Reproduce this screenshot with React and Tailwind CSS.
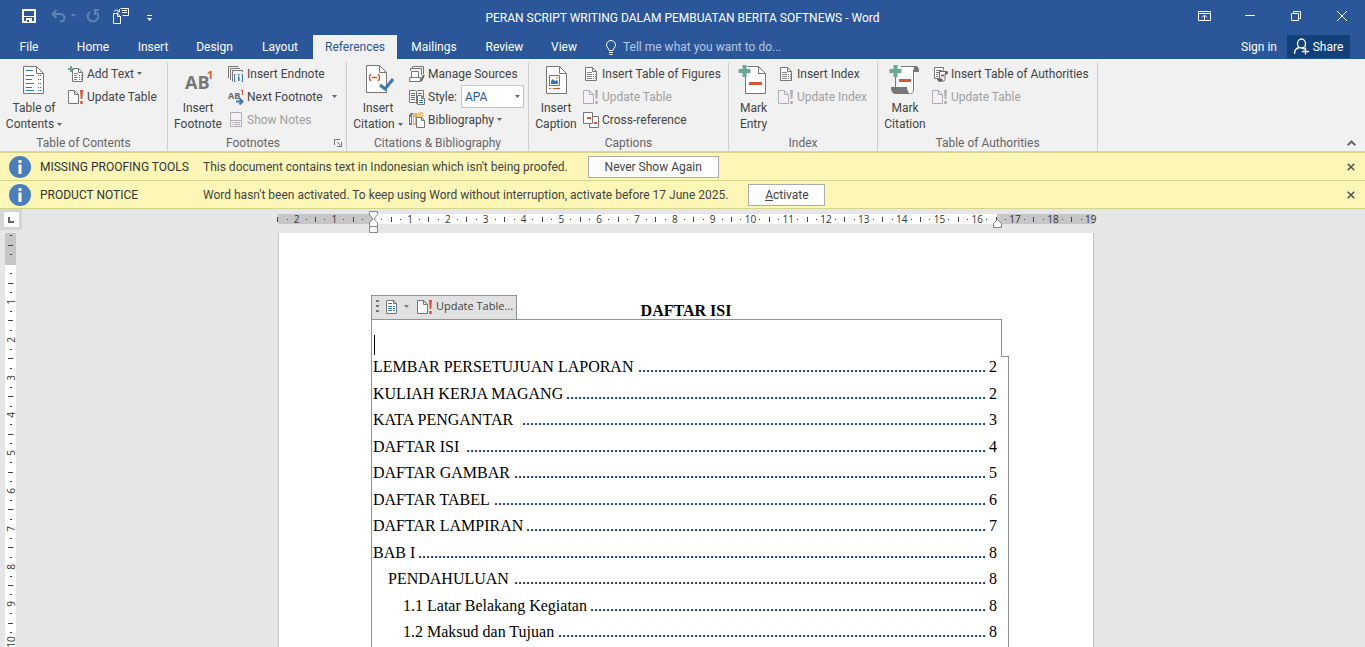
import React from "react";
import clsx from "clsx";

const TABS = [
  { label: "Home", width: "w-[62px]" },
  { label: "Insert", width: "w-[58px]" },
  { label: "Design", width: "w-[65px]" },
  { label: "Layout", width: "w-[66px]" },
  { label: "References", width: "w-[84px]", active: true },
  { label: "Mailings", width: "w-[74px]" },
  { label: "Review", width: "w-[67px]" },
  { label: "View", width: "w-[52px]" },
];

// dots is the length of the tab leader between the title and the page number
const TOC = [
  { title: "LEMBAR PERSETUJUAN LAPORAN", page: 2, level: 0, dots: 87 },
  { title: "KULIAH KERJA MAGANG", page: 2, level: 0, dots: 105 },
  { title: "KATA PENGANTAR", page: 3, level: 0, dots: 116 },
  { title: "DAFTAR ISI", page: 4, level: 0, dots: 130 },
  { title: "DAFTAR GAMBAR", page: 5, level: 0, dots: 118 },
  { title: "DAFTAR TABEL", page: 6, level: 0, dots: 123 },
  { title: "DAFTAR LAMPIRAN", page: 7, level: 0, dots: 115 },
  { title: "BAB I", page: 8, level: 0, dots: 142 },
  { title: "PENDAHULUAN", page: 8, level: 1, dots: 118 },
  { title: "1.1 Latar Belakang Kegiatan", page: 8, level: 2, dots: 99 },
  { title: "1.2 Maksud dan Tujuan", page: 8, level: 2, dots: 107 },
];

const INDENT = ["pl-0", "pl-[15px]", "pl-[30px]"];

/* ---------- icons ---------- */

function Icon({ w = 16, h = 16, className, children }) {
  return (
    <svg
      width={w}
      height={h}
      viewBox={`0 0 ${w} ${h}`}
      fill="none"
      className={clsx("shrink-0", className)}
      aria-hidden="true"
    >
      {children}
    </svg>
  );
}

function Caret({ className }) {
  return (
    <Icon w={5} h={3} className={className}>
      <path d="M0 0h5L2.5 3z" fill="currentColor" />
    </Icon>
  );
}

// sheet of paper with a folded top right corner
function Sheet({ x = 0, y = 0, w, h, fold, stroke = "#777", fill = "#fff" }) {
  const l = x + 0.5;
  const t = y + 0.5;
  const r = x + w - 0.5;
  const b = y + h - 0.5;
  return (
    <>
      <path
        d={`M${l} ${t}H${r - fold}L${r} ${t + fold}V${b}H${l}z`}
        fill={fill}
        stroke={stroke}
      />
      <path d={`M${r - fold} ${t}V${t + fold}H${r}`} stroke={stroke} />
    </>
  );
}

function TocIcon() {
  return (
    <Icon w={32} h={32}>
      <Sheet x={5} y={1} w={21} h={28} fold={7} />
      <path d="M8 5.500h7M8 10.500h8M8 14.500h6M8 18.500h8M8 22.500h6M8 25.500h8" stroke="#2f75b5" />
      <path d="M20 10.500h4M20 14.500h4M20 18.500h4M20 22.500h4M20 25.500h4" stroke="#2f75b5" strokeDasharray="1 1" />
    </Icon>
  );
}

function AddTextIcon() {
  return (
    <Icon>
      <Sheet x={4} y={2} w={11} h={14} fold={4} />
      <path d="M6 7.500h4M6 9.500h3M6 11.500h4M6 13.500h3" stroke="#888" />
      <path d="M11 9.500h3M11 11.500h3M11 13.500h3" stroke="#3b78b5" strokeDasharray="1 1" />
      <path d="M3 0v6M0 3h6" stroke="#6fa595" strokeWidth="2" />
    </Icon>
  );
}

function UpdateIcon({ muted }) {
  const line = muted ? "#b1afb1" : "#777";
  return (
    <Icon>
      <Sheet y={1} w={11} h={14} fold={4} stroke={line} fill={muted ? "#f5eff7" : "#fff"} />
      <path
        d="M12 1h3l-.7 9h-1.600zM12.300 12h2.400v3h-2.400z"
        fill={muted ? "#b1afb1" : "#d65532"}
      />
    </Icon>
  );
}

function FootnoteIcon() {
  return (
    <Icon w={32} h={32}>
      <text x="3" y="24" fontSize="18" fontWeight="700" fill="#777" fontFamily="Open Sans, sans-serif">
        AB
      </text>
      <text x="25" y="14" fontSize="11" fontWeight="700" fill="#d65532" fontFamily="Open Sans, sans-serif">
        1
      </text>
    </Icon>
  );
}

function EndnoteIcon() {
  return (
    <Icon>
      <path d="M.5 12V.5H10M2.500 14V2.500H12M4.500 15.500V4.500H14.500V6" stroke="#777" />
      <path d="M7.500 8.500h-1v7h1M13.500 8.500h1v7h-1" stroke="#3b78b5" />
      <path d="M10 8h1.500v1.500H10zM10 10.500h1.500V15H10z" fill="#3b78b5" />
    </Icon>
  );
}

function NextFootnoteIcon() {
  return (
    <Icon>
      <text x="0" y="10" fontSize="9" fontWeight="700" fill="#666" fontFamily="Open Sans, sans-serif">
        AB
      </text>
      <path d="M13 2l1.500-1V6" stroke="#d65532" />
      <path d="M8 12.500h6M11.500 9.500l3 3-3 3" stroke="#3b78b5" strokeWidth="2" />
    </Icon>
  );
}

function ShowNotesIcon() {
  return (
    <Icon>
      <path d="M2.500.5h11v14h-11z" fill="#f5eff7" stroke="#b1afb1" />
      <path d="M3 8.500h10" stroke="#b1afb1" />
      <path d="M4 10.500h1M6 10.500h6M4 12.500h1M6 12.500h6" stroke="#b1afb1" />
    </Icon>
  );
}

function CitationIcon() {
  return (
    <Icon w={32} h={32}>
      <Sheet x={4} y={0} w={21} h={28} fold={7} />
      <path d="M9 9c-2 2-2 5 0 7M16 9c2 2 2 5 0 7M10 12.500h5" stroke="#d65532" strokeWidth="1.600" />
      <path d="M18 20l5 4 8-10" stroke="#3b78b5" strokeWidth="3" />
    </Icon>
  );
}

function SourcesIcon() {
  return (
    <Icon>
      <path d="M3.500 3V.5h11V8M1.500 5V2.500h11V9" stroke="#777" />
      <path d="M.5 15.500v-4h11v4zM2.500 11V5.500h7V11" fill="#fff" stroke="#777" />
      <path d="M12 15l3-6" stroke="#666" strokeWidth="2" />
    </Icon>
  );
}

function StyleIcon() {
  return (
    <Icon>
      <path d="M.5 1.500h6l1 1 1-1h6v12h-6l-1 1-1-1h-6zM7.500 2v12" fill="#fff" stroke="#777" />
      <path d="M2 4.500h4M2 6.500h4M2 8.500h4M2 10.500h4M9 4.500h4" stroke="#3b78b5" />
      <Sheet x={8} y={6} w={8} h={10} fold={3} />
      <path d="M10 11.500h4M10 13.500h4" stroke="#3b78b5" />
    </Icon>
  );
}

function BibliographyIcon() {
  return (
    <Icon>
      <path d="M0 3l2-2h3L3 3v10H0z" fill="#777" />
      <path d="M4 3l2-2h2v12H4z" fill="#e9b55c" />
      <path d="M8 2l2-2h4v6H8z" fill="#f0c98a" />
      <path d="M1.500 5v6M5.500 5v6" stroke="#fff" />
      <Sheet x={7} y={5} w={9} h={11} fold={3} />
    </Icon>
  );
}

function CaptionIcon() {
  return (
    <Icon w={32} h={32}>
      <Sheet x={6} y={1} w={21} h={28} fold={7} />
      <path d="M9.500 10.500h10v10h-10z" fill="#fff" stroke="#777" />
      <path d="M11 19v-3l2-2 2 2 2-1 1 2v2z" fill="#3b78b5" />
      <path d="M16 12h2v2h-2z" fill="#e9b55c" />
      <path d="M9 23.500h2M13 23.500h7" stroke="#d65532" />
    </Icon>
  );
}

function ListIcon() {
  return (
    <Icon>
      <Sheet x={2} y={1} w={12} h={14} fold={4} />
      <path d="M4 6.500h5M4 8.500h5M4 10.500h5M4 12.500h5" stroke="#888" />
      <path d="M10 8.500h1M10 10.500h1M10 12.500h1M12 8.500h1M12 10.500h1M12 12.500h1" stroke="#888" />
    </Icon>
  );
}

function CrossRefIcon() {
  return (
    <Icon>
      <path d="M6.500 4.500h9v11h-9z" fill="#fff" stroke="#777" />
      <path d="M.5.5h9v11h-9z" fill="#fff" stroke="#777" />
      <path d="M4 5h4v2H4zM11 10h3v2h-3z" fill="#d65532" />
    </Icon>
  );
}

function MarkEntryIcon() {
  return (
    <Icon w={32} h={32}>
      <Sheet x={7} y={1} w={21} h={28} fold={7} />
      <path d="M6.500 0v12M.5 6h12" stroke="#f1f1f1" strokeWidth="6" />
      <path d="M6.500 0v12M.5 6h12" stroke="#6fa595" strokeWidth="4" />
      <path d="M11 18.500h13" stroke="#d65532" strokeWidth="3" />
    </Icon>
  );
}

function MarkCitationIcon() {
  return (
    <Icon w={32} h={32}>
      <path d="M8 1.500h18v24c0 2-2 3-4 3H9V8z" fill="#fff" />
      <path d="M12 1.500h13M6.500 10v12M24.500 5v20c0 2-1 3.500-3 3.500" stroke="#777" />
      <path d="M24 1h3c2 0 3 2 3 6h-5c0-3 0-5-1-6zM2 22h16c0 3 1 5 3 7H7c-3 0-5-2-5-7z" fill="#777" />
      <path d="M6.500 0v12M.5 6h12" stroke="#f1f1f1" strokeWidth="6" />
      <path d="M6.500 0v12M.5 6h12" stroke="#6fa595" strokeWidth="4" />
      <path d="M10 15.500h12" stroke="#d65532" strokeWidth="3" />
    </Icon>
  );
}

function AuthoritiesIcon() {
  return (
    <Icon>
      <path d="M2.500 12.500V1.500h9v3" fill="#fff" stroke="#777" />
      <path d="M2.500 12.500h3M4 4.500h6M4 6.500h3M4 8.500h2M4 10.500h2" stroke="#777" />
      <path d="M7.500 5.500h6c1 0 1.500 1 1.500 2.500h-2v5c0 1-.5 2-1.500 2h-4c-1 0-2-.5-2-2.500h2z" fill="#fff" stroke="#666" />
      <path d="M13 5h2c.6 0 1 1 1 3h-3zM5 12.500h5.500v3H6.500z" fill="#666" />
      <path d="M9 9.500h3" stroke="#d65532" strokeWidth="2" />
    </Icon>
  );
}

/* ---------- title bar and tabs ---------- */

function TitleBar() {
  return (
    <header className="grid h-[35px] grid-cols-[1fr_auto_1fr] items-center">
      <div className="flex items-center pb-1 pl-[22px]">
        <button aria-label="Save">
          <Icon w={14} h={14}>
            <path d="M1 1h12v12H1z" stroke="#fff" strokeWidth="2" />
            <path d="M2 7h10v1H2zM4 9h6v4H4z" fill="#fff" />
            <path d="M5 11h2v2H5z" fill="#2b579a" />
          </Icon>
        </button>
        <button aria-label="Undo" className="ml-[15px] flex items-center gap-[5px] text-[#5f80b5]">
          <Icon w={15} h={14}>
            <path d="M5.500 1L1.500 5l4 4M2 5h7c3 0 5 2 4.500 4.500C13 11.500 11 12.500 9 12.500" stroke="currentColor" strokeWidth="2" />
          </Icon>
          <Caret />
        </button>
        <button aria-label="Redo" className="ml-[10px] text-[#5f80b5]">
          <Icon w={14} h={14}>
            <path d="M4 3a5.200 5.200 0 1 0 6.500.5M8 1h5M9 1v5" stroke="currentColor" strokeWidth="2" />
          </Icon>
        </button>
        <button aria-label="Switch windows" className="ml-[13px]">
          <Icon w={17} h={16}>
            <Sheet y={5} w={8} h={11} fold={3} stroke="#fff" fill="none" />
            <path d="M7.500.5h8v7h-6M9 2.500h5M9 4.500h5M1 3.500c1-2 3-2 5 0M6.500 1v3H4" stroke="#fff" />
          </Icon>
        </button>
        <button aria-label="Customize Quick Access Toolbar" className="mt-1 ml-[17px]">
          <Icon w={5} h={6}>
            <path d="M0 .5h5" stroke="#fff" />
            <path d="M0 3h5L2.500 6z" fill="#fff" />
          </Icon>
        </button>
      </div>
      <h1 className="text-xs text-white">PERAN SCRIPT WRITING DALAM PEMBUATAN BERITA SOFTNEWS - Word</h1>
      <div className="flex justify-end pb-1">
        <button aria-label="Ribbon Display Options" className="flex w-[46px] justify-center">
          <Icon w={13} h={10}>
            <path d="M.5.5h12v9H.5zM0 2.500h13M6.500 9V4.500M4 6.500l2.500-2.500L9 6.500" stroke="#fff" />
          </Icon>
        </button>
        <button aria-label="Minimize" className="flex w-[46px] items-center justify-center">
          <span className="h-px w-[10px] bg-white" />
        </button>
        <button aria-label="Restore Down" className="flex w-[46px] justify-center">
          <Icon w={10} h={10}>
            <path d="M.5 2.500h7v7h-7zM2.500 2V.5h7v7H8" stroke="#fff" />
          </Icon>
        </button>
        <button aria-label="Close" className="flex w-[46px] justify-center">
          <Icon w={10} h={10}>
            <path d="M0 0l10 10M10 0L0 10" stroke="#fff" />
          </Icon>
        </button>
      </div>
    </header>
  );
}

function TabBar() {
  return (
    <nav className="flex h-6 items-stretch text-xs text-white">
      <button className="mr-1 w-[58px]">File</button>
      {TABS.map((tab) => (
        <button
          key={tab.label}
          className={clsx(
            tab.width,
            "text-center whitespace-nowrap",
            tab.active && "bg-[#f1f1f1] text-[#2b579a]"
          )}
        >
          {tab.label}
        </button>
      ))}
      <button className="ml-4 flex items-center gap-[7px] text-[#b5c6e2]">
        <Icon w={10} h={15}>
          <path d="M3 10.500c0-2-2.500-3-2.500-5.500a4.500 4.500 0 0 1 9 0c0 2.500-2.500 3.500-2.500 5.500zM3 12.500h4M3.500 14.500h3" stroke="#fff" />
        </Icon>
        Tell me what you want to do...
      </button>
      <div className="ml-auto flex pr-[15px]">
        <button className="px-[10px]">Sign in</button>
        <button className="flex h-[23px] w-[63px] items-center justify-center gap-[3px] bg-[#124078]">
          <Icon w={16} h={17}>
            <path d="M3.500 5.500a4 4.500 0 1 1 8 0c0 3-2 4.500-4 4.500s-4-1.500-4-4.500zM.5 16c0-4 2-6 5-6.500M7 10c2 0 3 .5 4 1.500" stroke="#fff" strokeWidth="1.300" />
            <path d="M11.500 9.500v7M8 13.500h7" stroke="#fff" strokeWidth="1.300" />
          </Icon>
          Share
        </button>
      </div>
    </nav>
  );
}

/* ---------- ribbon ---------- */

function Group({ label, width, launcher, children }) {
  return (
    <section className={clsx("flex flex-col border-r border-[#d0d0d0] pl-1", width)}>
      <div className="flex gap-1">{children}</div>
      <div className="mt-auto flex items-center pr-1">
        <h2 className="flex-1 text-center leading-4 text-[#666]">{label}</h2>
        {launcher && (
          <button aria-label={`${label} options`}>
            <Icon w={8} h={8}>
              <path d="M.5 6V.5H6M3 3l3.500 3.500M7.500 3v4.500H3" stroke="#777" />
            </Icon>
          </button>
        )}
      </div>
    </section>
  );
}

function BigButton({ icon, lines, width, menu }) {
  return (
    <button className={clsx("flex flex-col items-center pt-[3px] leading-4", width)}>
      {icon}
      <span className="mt-[3px] block whitespace-nowrap">{lines[0]}</span>
      <span className="flex items-center gap-[3px] whitespace-nowrap">
        {lines[1]}
        {menu && <Caret className="text-[#666]" />}
      </span>
    </button>
  );
}

function SmallButton({ icon, label, menu, disabled, wide }) {
  return (
    <button
      disabled={disabled}
      className={clsx(
        "flex h-[23px] items-center gap-[3px] whitespace-nowrap",
        disabled && "text-[#a0a0a0]"
      )}
    >
      {icon}
      {label}
      {menu && <Caret className={clsx("text-[#666]", wide && "ml-[6px]")} />}
    </button>
  );
}

function Ribbon() {
  return (
    <div className="flex h-[93px] border-b border-[#d0d0d0] bg-[#f1f1f1] pt-[3px] text-xs text-[#444]">
      <Group label="Table of Contents" width="w-[168px]">
        <BigButton icon={<TocIcon />} lines={["Table of", "Contents"]} width="w-[60px]" menu />
        <div>
          <SmallButton icon={<AddTextIcon />} label="Add Text" menu />
          <SmallButton icon={<UpdateIcon />} label="Update Table" />
        </div>
      </Group>
      <Group label="Footnotes" width="w-[179px]" launcher>
        <BigButton icon={<FootnoteIcon />} lines={["Insert", "Footnote"]} width="w-[52px]" />
        <div>
          <SmallButton icon={<EndnoteIcon />} label="Insert Endnote" />
          <SmallButton icon={<NextFootnoteIcon />} label="Next Footnote" menu wide />
          <SmallButton icon={<ShowNotesIcon />} label="Show Notes" disabled />
        </div>
      </Group>
      <Group label="Citations &amp; Bibliography" width="w-[182px]">
        <BigButton icon={<CitationIcon />} lines={["Insert", "Citation"]} width="w-[54px]" menu />
        <div>
          <SmallButton icon={<SourcesIcon />} label="Manage Sources" />
          <div className="flex h-[23px] items-center gap-[3px]">
            <StyleIcon />
            <label htmlFor="style" className="w-[30px]">
              Style:
            </label>
            <span className="relative flex items-center">
              <select
                id="style"
                defaultValue="APA"
                className="h-[23px] w-[63px] appearance-none border border-[#c6c6c6] bg-white pl-[3px] text-[#2b579a]"
              >
                <option>APA</option>
                <option>MLA</option>
                <option>Chicago</option>
              </select>
              <Caret className="pointer-events-none absolute right-1 text-[#666]" />
            </span>
          </div>
          <SmallButton icon={<BibliographyIcon />} label="Bibliography" menu />
        </div>
      </Group>
      <Group label="Captions" width="w-[200px]">
        <BigButton icon={<CaptionIcon />} lines={["Insert", "Caption"]} width="w-[46px]" />
        <div>
          <SmallButton icon={<ListIcon />} label="Insert Table of Figures" />
          <SmallButton icon={<UpdateIcon muted />} label="Update Table" disabled />
          <SmallButton icon={<CrossRefIcon />} label="Cross-reference" />
        </div>
      </Group>
      <Group label="Index" width="w-[149px]">
        <BigButton icon={<MarkEntryIcon />} lines={["Mark", "Entry"]} width="w-[41px]" />
        <div>
          <SmallButton icon={<ListIcon />} label="Insert Index" />
          <SmallButton icon={<UpdateIcon muted />} label="Update Index" disabled />
        </div>
      </Group>
      <Group label="Table of Authorities" width="w-[220px]">
        <BigButton icon={<MarkCitationIcon />} lines={["Mark", "Citation"]} width="w-[46px]" />
        <div>
          <SmallButton icon={<AuthoritiesIcon />} label="Insert Table of Authorities" />
          <SmallButton icon={<UpdateIcon muted />} label="Update Table" disabled />
        </div>
      </Group>
      <button aria-label="Collapse the Ribbon" className="mt-auto mr-[9px] mb-[5px] ml-auto">
        <Icon w={9} h={6}>
          <path d="M.7 5.300L4.500 1.500l3.800 3.800" stroke="#666" strokeWidth="2" />
        </Icon>
      </button>
    </div>
  );
}

/* ---------- message bars ---------- */

function Notice({ title, message, action, buttonWidth }) {
  return (
    <div className="flex h-7 items-center border-b border-[#d8d48a] bg-[#fcf7b6] pr-[10px] pl-[9px] text-xs text-[#444]">
      <Icon w={22} h={22}>
        <circle cx="11" cy="11" r="11" fill="#4a7ebb" />
        <path d="M9.500 4h3v3h-3zM9.500 8.500h3V18h-3z" fill="#fff" />
      </Icon>
      <strong className="ml-[9px] w-[163px] font-normal whitespace-nowrap text-[#333]">{title}</strong>
      <span className="whitespace-nowrap">{message}</span>
      <button className={clsx("ml-5 h-[22px] border border-[#ababab] bg-[#fdfdfd]", buttonWidth)}>
        {action}
      </button>
      <button aria-label="Close message" className="ml-auto">
        <Icon w={8} h={8}>
          <path d="M.7.7l6.600 6.600M7.300.7L.7 7.300" stroke="#555" strokeWidth="1.600" />
        </Icon>
      </button>
    </div>
  );
}

/* ---------- rulers ---------- */

function HorizontalRuler() {
  // centimetres left of the margin count down, right of it they count up
  const marks = Array.from({ length: 22 }, (_, i) => Math.abs(i - 2));
  return (
    <div className="relative mt-[5px] mb-[9px] flex h-[10px] w-[816px] shrink-0 font-['Open_Sans',sans-serif] text-[10px] leading-[10px] text-[#333]">
      <div className="w-[95px] bg-[#c6c6c6]" />
      <div className="flex-1 bg-white" />
      <div className="w-[97px] bg-[#c6c6c6]" />
      <div className="absolute top-0 -left-[5px] flex w-[832px]">
        {marks.map((n, i) => (
          <div key={i} className="grid h-[10px] flex-1 grid-cols-4 place-items-center">
            <span className="h-[5px] w-px bg-[#444]" />
            <span className="size-px bg-[#444]" />
            <span>{n > 0 ? n : ""}</span>
            {i < marks.length - 1 && <span className="size-px bg-[#444]" />}
          </div>
        ))}
      </div>
      <Icon w={9} h={22} className="absolute -top-[3px] left-[91px]">
        <path d="M.5.5h8v3L5 8l3.500 4v3.500h-8V12L4 8 .5 3.500z" fill="#fff" stroke="#888" />
        <path d="M.5 15.500h8v6h-8z" fill="#fff" stroke="#888" />
      </Icon>
      <Icon w={9} h={9} className="absolute top-[5px] right-[92px]">
        <path d="M.5 8.500V4.500l4-4 4 4v4z" fill="#fff" stroke="#888" />
      </Icon>
    </div>
  );
}

function VerticalRuler() {
  const marks = Array.from({ length: 10 }, (_, i) => i + 1);
  return (
    <div className="flex w-[22px] shrink-0 flex-col">
      <button
        aria-label="Left tab"
        className="flex h-[21px] w-[22px] items-center justify-center bg-[#d6d6d6]"
      >
        <span className="flex size-[15px] items-center justify-center bg-[#fdfdfd]">
          <span className="size-[6px] border-b-2 border-l-2 border-[#666]" />
        </span>
      </button>
      <div className="mt-[3px] ml-[5px] flex w-[11px] flex-1 flex-col bg-white font-['Open_Sans',sans-serif] text-[10px] leading-[10px] text-[#333]">
        <div className="flex h-8 shrink-0 flex-col items-center justify-between bg-[#c6c6c6] py-[2px]">
          <span className="h-px w-[2px] bg-[#444]" />
          <span className="h-px w-[5px] bg-[#444]" />
          <span className="mb-2 h-px w-[2px] bg-[#444]" />
        </div>
        <div className="mt-1 flex h-[378px] shrink-0 flex-col">
          {marks.map((n) => (
            <div key={n} className="grid min-h-0 flex-1 grid-rows-4 place-items-center">
              <span className="h-px w-[2px] bg-[#444]" />
              <span className="h-px w-[5px] bg-[#444]" />
              <span className="h-px w-[2px] bg-[#444]" />
              <span className="-rotate-90">{n}</span>
            </div>
          ))}
        </div>
      </div>
    </div>
  );
}

/* ---------- document ---------- */

function TocToolbar() {
  return (
    <div className="absolute top-0 left-[92px] flex h-6 w-[146px] items-center border border-b-0 border-[#949494] bg-[#e1e1e1] pb-[2px] pl-1 font-['Open_Sans',sans-serif] text-[11px] text-[#444]">
      <Icon w={3} h={13}>
        <path d="M0 0h3v2H0zM0 5h3v2H0zM0 10h3v2H0z" fill="#777" />
      </Icon>
      <button aria-label="Table of Contents" className="ml-[7px] flex items-center gap-[7px]">
        <Icon w={11} h={14}>
          <Sheet w={11} h={14} fold={3} />
          <path d="M2 3.500h4M2 6.500h4M2 8.500h4M2 10.500h4M7 6.500h2M7 8.500h2M7 10.500h2" stroke="#2f75b5" />
        </Icon>
        <Caret className="text-[#777]" />
      </button>
      <button className="ml-2 flex items-center gap-[3px] whitespace-nowrap">
        <UpdateIcon />
        Update Table...
      </button>
    </div>
  );
}

function TocRow({ title, page, level, dots }) {
  return (
    <li className={clsx("flex min-h-0 items-start leading-5 whitespace-nowrap", INDENT[level])}>
      <span>{title}</span>
      <span className="ml-auto" aria-hidden="true">
        {".".repeat(dots)}
      </span>
      <span className="pl-[3px]">{page}</span>
    </li>
  );
}

function DocumentPage() {
  return (
    <article className="w-[816px] flex-1 border-x border-[#c6c6c6] bg-white pt-[62px] font-['Liberation_Serif',serif] text-base text-black">
      <div className="relative flex h-6 items-end justify-center">
        <h2 className="leading-4 font-bold">DAFTAR ISI</h2>
        <TocToolbar />
      </div>
      <div className="ml-[92px] w-[638px]">
        <div className="flex h-[38px]">
          <div className="flex w-[631px] items-end border border-b-0 border-[#949494] pl-[2px]">
            <span className="mb-[2px] h-5 w-px bg-black" />
          </div>
          <div className="flex-1 border-b border-[#949494]" />
        </div>
        <ol className="grid h-[292px] auto-rows-fr grid-cols-1 border-x border-[#949494] pr-[11px] pl-px">
          {TOC.map((row) => (
            <TocRow key={row.title} {...row} />
          ))}
        </ol>
      </div>
    </article>
  );
}

export default function App() {
  return (
    <div className="flex h-screen flex-col overflow-hidden bg-[#e6e6e6] font-['Roboto',sans-serif]">
      <div className="shrink-0 bg-[#2b579a]">
        <TitleBar />
        <TabBar />
      </div>
      <div className="shrink-0">
        <Ribbon />
        <div className="border-t border-[#d8d48a]">
          <Notice
            title="MISSING PROOFING TOOLS"
            message="This document contains text in Indonesian which isn't being proofed."
            action="Never Show Again"
            buttonWidth="w-[131px]"
          />
          <Notice
            title="PRODUCT NOTICE"
            message="Word hasn't been activated. To keep using Word without interruption, activate before 17 June 2025."
            action={
              <>
                <u>A</u>ctivate
              </>
            }
            buttonWidth="w-[77px]"
          />
        </div>
      </div>
      <div className="flex min-h-0 flex-1">
        <VerticalRuler />
        <main className="flex flex-1 flex-col items-center pr-[15px]">
          <HorizontalRuler />
          <DocumentPage />
        </main>
      </div>
    </div>
  );
}
